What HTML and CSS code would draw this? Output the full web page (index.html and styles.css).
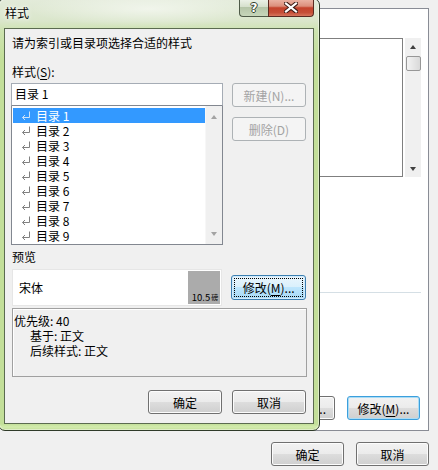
FILE: index.html
```html
<!DOCTYPE html>
<html lang="zh-CN">
<head>
  <meta charset="UTF-8" />
  <title>样式</title>
  <link rel="stylesheet" href="styles.css">
</head>
<body>
  <div class="desk">
    <!-- parent dialog behind -->
    <div class="parent">
      <div class="panel">
        <div class="panel-list">
          <div class="plist-box"></div>
          <div class="vscroll vscroll-live">
            <span class="arrow up"></span>
            <span class="thumb"></span>
            <span class="grow"></span>
            <span class="arrow down"></span>
          </div>
        </div>
        <div class="panel-sep"></div>
        <div class="panel-btns">
          <button class="btn btn-sm btn-hidden">...</button>
          <button class="btn btn-sm btn-default">修改(<u>M</u>)...</button>
        </div>
      </div>
      <div class="parent-foot">
        <button class="btn btn-sm">确定</button>
        <button class="btn btn-sm">取消</button>
      </div>
    </div>

    <!-- the 样式 dialog -->
    <div class="dialog">
      <div class="titlebar">
        <span class="title">样式</span>
        <div class="caption">
          <span class="cap-help">?</span>
          <span class="cap-close">
            <svg width="14" height="11" viewBox="0 0 14 11">
              <path d="M2 1.5 L12 9.5 M12 1.5 L2 9.5" stroke="#3b1a14" stroke-width="4.2" stroke-linecap="square" fill="none"/>
              <path d="M2 1.5 L12 9.5 M12 1.5 L2 9.5" stroke="#ffffff" stroke-width="2.2" stroke-linecap="square" fill="none"/>
            </svg>
          </span>
        </div>
      </div>

      <div class="client">
        <div class="intro">请为索引或目录项选择合适的样式</div>
        <div class="label">样式(<u>S</u>):</div>

        <div class="pick-row">
          <div class="pick-col">
            <div class="style-input">目录 1</div>
            <div class="style-list">
              <ul class="items">
                <li class="sel"><svg class="ret" viewBox="0 0 10 9"><path d="M8.5 0.5 V6.5 H1.5 M4 4 L1.5 6.5 L4 9"/></svg>目录 1</li>
                <li><svg class="ret" viewBox="0 0 10 9"><path d="M8.5 0.5 V6.5 H1.5 M4 4 L1.5 6.5 L4 9"/></svg>目录 2</li>
                <li><svg class="ret" viewBox="0 0 10 9"><path d="M8.5 0.5 V6.5 H1.5 M4 4 L1.5 6.5 L4 9"/></svg>目录 3</li>
                <li><svg class="ret" viewBox="0 0 10 9"><path d="M8.5 0.5 V6.5 H1.5 M4 4 L1.5 6.5 L4 9"/></svg>目录 4</li>
                <li><svg class="ret" viewBox="0 0 10 9"><path d="M8.5 0.5 V6.5 H1.5 M4 4 L1.5 6.5 L4 9"/></svg>目录 5</li>
                <li><svg class="ret" viewBox="0 0 10 9"><path d="M8.5 0.5 V6.5 H1.5 M4 4 L1.5 6.5 L4 9"/></svg>目录 6</li>
                <li><svg class="ret" viewBox="0 0 10 9"><path d="M8.5 0.5 V6.5 H1.5 M4 4 L1.5 6.5 L4 9"/></svg>目录 7</li>
                <li><svg class="ret" viewBox="0 0 10 9"><path d="M8.5 0.5 V6.5 H1.5 M4 4 L1.5 6.5 L4 9"/></svg>目录 8</li>
                <li><svg class="ret" viewBox="0 0 10 9"><path d="M8.5 0.5 V6.5 H1.5 M4 4 L1.5 6.5 L4 9"/></svg>目录 9</li>
              </ul>
              <div class="vscroll vscroll-off">
                <span class="arrow up"></span>
                <span class="grow"></span>
                <span class="arrow down"></span>
              </div>
            </div>
          </div>
          <div class="side-btns">
            <button class="btn" disabled>新建(N)...</button>
            <button class="btn" disabled>删除(D)</button>
          </div>
        </div>

        <div class="label preview-label">预览</div>
        <div class="preview-row">
          <div class="preview">
            <div class="preview-text">宋体</div>
            <div class="preview-size">10.5 <small>磅</small></div>
          </div>
          <button class="btn btn-focus"><span class="focus-ring">修改(<u>M</u>)...</span></button>
        </div>

        <div class="desc">
          <div>优先级: 40</div>
          <div class="indent">基于: 正文</div>
          <div class="indent">后续样式: 正文</div>
        </div>

        <div class="dlg-btns">
          <button class="btn">确定</button>
          <button class="btn">取消</button>
        </div>
      </div>
    </div>
  </div>
</body>
</html>
```

FILE: styles.css
```css
* {
  box-sizing: border-box;
}

body {
  margin: 0;
  background: #f0f0f0;
  font-family: "Noto Sans CJK SC", "Noto Sans", sans-serif;
  font-size: 12px;
  color: #000;
}

u {
  text-decoration: underline;
  text-underline-offset: 2px;
}

.desk {
  position: relative;
  width: 438px;
  height: 470px;
  overflow: hidden;
}

/* ---------- parent dialog ---------- */

.parent {
  padding: 8px 9px 0 8px;
}

.panel {
  height: 423px;
  background: #fff;
  border: 1px solid #898c95;
  padding: 29px 7px 0 10px;
}

.panel-list {
  display: flex;
  gap: 2px;
  height: 139px;
}

.plist-box {
  flex: 1;
  border: 1px solid #7f7f7f;
}

.vscroll {
  width: 16px;
  display: flex;
  flex-direction: column;
  align-items: center;
  background: #f0f0f0;
}

.vscroll .grow {
  flex: 1;
}

.arrow {
  width: 0;
  height: 0;
  border-left: 3.5px solid transparent;
  border-right: 3.5px solid transparent;
}

.arrow.up {
  border-bottom: 4px solid #404040;
}

.arrow.down {
  border-top: 4px solid #404040;
}

.vscroll-live .arrow.up {
  margin-top: 7px;
}

.vscroll-live .arrow.down {
  margin-bottom: 6px;
}

.thumb {
  margin-top: 7px;
  width: 15px;
  height: 15px;
  border: 1px solid #979797;
  border-radius: 2px;
  background: linear-gradient(to right, #f3f3f3, #e6e6e6 50%, #d9d9d9);
}

.panel-sep {
  margin-top: 115px;
  height: 1px;
  background: #d5dfe5;
}

.panel-btns {
  margin-top: 103px;
  margin-right: 1px;
  display: flex;
  justify-content: flex-end;
  gap: 12px;
}

.parent-foot {
  padding-top: 11px;
  display: flex;
  justify-content: flex-end;
  gap: 12px;
}

/* ---------- buttons ---------- */

.btn {
  font: inherit;
  width: 74px;
  height: 24px;
  padding: 0;
  color: #000;
  border: 1px solid #707070;
  border-radius: 3px;
  background: linear-gradient(#f2f2f2 0%, #ebebeb 50%, #dddddd 50%, #cfcfcf 100%);
  box-shadow: inset 0 0 0 1px #fcfcfc;
}

.btn-sm {
  width: 73px;
  height: 24px;
}

.btn-hidden {
  text-align: right;
  padding-right: 8px;
}

.btn:disabled {
  color: #a3a3a3;
  border-color: #adb2b5;
  background: #f4f4f4;
  box-shadow: none;
}

.btn-default {
  border-color: #3c9fdc;
  box-shadow: inset 0 0 0 1px #a9dcf6;
}

.btn-focus {
  display: flex;
  padding: 2px;
  height: 25px;
  border-color: #3c7fb1;
  background: linear-gradient(#eaf6fd 0%, #d9f0fc 50%, #bee6fd 50%, #a7d9f5 100%);
  box-shadow: inset 0 0 0 1px #d2eafa;
}

.focus-ring {
  flex: 1;
  border: 1px dotted #000;
  line-height: 17px;
  text-align: center;
}

/* ---------- 样式 dialog ---------- */

.dialog {
  position: absolute;
  left: -2px;
  top: -2px;
  width: 322px;
  height: 433px;
  display: flex;
  flex-direction: column;
  padding: 0 5px 6px;
  border: 1px solid #2f3b29;
  border-radius: 7px;
  background:
    radial-gradient(ellipse 120px 18px at 150px 10px, rgba(255, 255, 255, 0.55), rgba(255, 255, 255, 0)),
    linear-gradient(#e3ebda 0px, #dae6cb 22px, #cde3b0 32px, #c3df99 60px, #c3df99 calc(100% - 6px), #d3ecad calc(100% - 3px), #c2dd98 100%);
  box-shadow: inset 0 0 0 1px rgba(255, 255, 255, 0.45);
}

.titlebar {
  height: 29px;
  display: flex;
  align-items: flex-start;
  padding-left: 1px;
}

.title {
  padding-top: 5px;
  line-height: 17px;
  text-shadow: 0 0 6px #fff, 0 0 3px #fff;
}

.caption {
  margin-left: auto;
  display: flex;
  height: 18px;
}

.cap-help,
.cap-close {
  display: flex;
  align-items: center;
  justify-content: center;
  border: 1px solid #4e5a47;
  border-top: none;
}

.cap-help {
  width: 29px;
  border-right: none;
  border-radius: 0 0 0 4px;
  background: linear-gradient(#eef3ea 0%, #d6e0cd 45%, #b5c5a8 50%, #c7d6ba 100%);
  font-family: "DejaVu Sans", sans-serif;
  font-weight: bold;
  font-size: 12px;
  line-height: 1;
  color: #fff;
  text-shadow: 1px 0 #33402c, -1px 0 #33402c, 0 1px #33402c, 0 -1px #33402c;
}

.cap-close {
  width: 46px;
  border-color: #5a2a21;
  border-radius: 0 0 4px 0;
  background: linear-gradient(#ecb7a8 0%, #dc8f7c 42%, #c4432c 52%, #c54f38 80%, #d7765d 100%);
}

.client {
  flex: 1;
  border: 1px solid #5b6b50;
  background: #f0f0f0;
  padding: 0 7px 0 6px;
  display: flex;
  flex-direction: column;
}

.intro {
  margin-top: 6px;
  padding-left: 1px;
  line-height: 16px;
}

.label {
  margin-top: 13px;
  padding-left: 1px;
  line-height: 16px;
}

.pick-row {
  margin-top: 3px;
  display: flex;
  align-items: flex-start;
}

.pick-col {
  width: 212px;
}

.style-input {
  height: 23px;
  background: #fff;
  border: 1px solid #a5acb5;
  border-bottom-color: #828790;
  padding-left: 3px;
  line-height: 20px;
}

.style-list {
  height: 139px;
  display: flex;
  background: #fff;
  border: 1px solid #828790;
  border-top: none;
}

.items {
  list-style: none;
  margin: 0;
  padding: 2px 0 0 1px;
  width: 193px;
}

.items li {
  display: flex;
  align-items: center;
  height: 15px;
  line-height: 15px;
  white-space: nowrap;
  overflow: hidden;
}

.items .ret {
  width: 10px;
  height: 9px;
  margin: 0 5px 0 8px;
  fill: none;
  stroke: #808080;
  stroke-width: 1;
}

.items .sel {
  background: #3399ff;
  color: #fff;
}

.items .sel .ret {
  stroke: #cfe3f8;
}

.vscroll-off {
  width: 17px;
  border-left: 1px solid #f7f7f7;
}

.vscroll-off .arrow.up {
  margin-top: 9px;
  border-bottom-color: #a3a3a3;
}

.vscroll-off .arrow.down {
  margin-bottom: 8px;
  border-top-color: #a3a3a3;
}

.side-btns {
  margin-left: 9px;
  display: flex;
  flex-direction: column;
  gap: 10px;
}

.preview-label {
  margin-top: 4px;
}

.preview-row {
  margin-top: 4px;
  display: flex;
  align-items: center;
}

.preview {
  margin-left: 1px;
  width: 211px;
  height: 37px;
  display: flex;
  background: #fff;
  border: 1px solid #e6e6e6;
  padding: 1px;
}

.preview-text {
  flex: 1;
  padding-left: 5px;
  display: flex;
  align-items: center;
}

.preview-size {
  width: 32px;
  background: #ababab;
  display: flex;
  align-items: flex-end;
  justify-content: flex-end;
  padding: 0 2px 1px 0;
  font-size: 9.5px;
  line-height: 12px;
  white-space: nowrap;
}

.preview-size small {
  font-size: 7px;
  margin-left: 1px;
}

.btn-focus {
  margin-left: 9px;
  width: 75px;
}

.desc {
  margin: 2px -1px 0 1px;
  height: 69px;
  border: 1px solid #a0a0a0;
  box-shadow: inset 1px 1px 0 #fff;
  padding: 4px 0 0 1px;
  line-height: 15px;
}

.desc .indent {
  padding-left: 16px;
}

.dlg-btns {
  margin-top: 13px;
  display: flex;
  justify-content: flex-end;
  gap: 10px;
}
```
